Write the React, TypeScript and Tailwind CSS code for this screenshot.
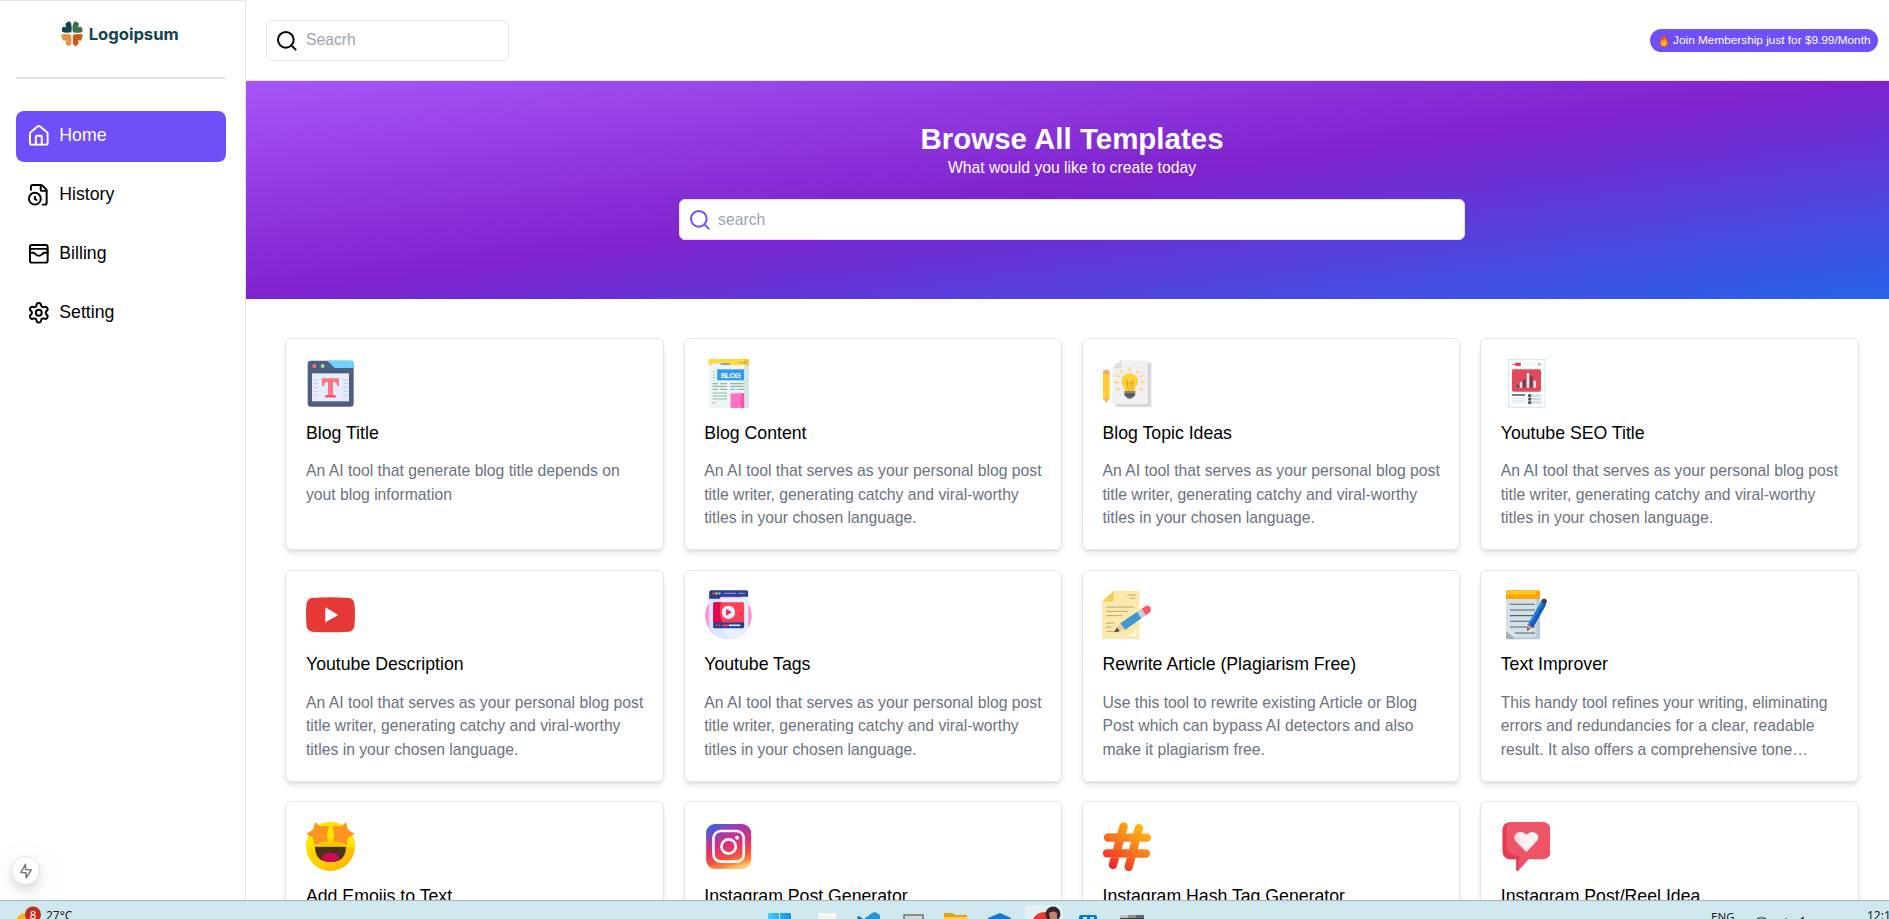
import React from "react";
import { FileClock, House, Search, Settings, WalletCards } from "lucide-react";

type IconProps = { box: string; children: React.ReactNode };

function Art({ box, children }: IconProps) {
  return (
    <svg viewBox={box} className="size-12.5 shrink-0">
      {children}
    </svg>
  );
}

const BlogTitleIcon = () => (
  <Art box="78 87 147.5 147.5">
    <rect x="83" y="92" width="138" height="138" rx="9" fill="#4d5e80" />
    <path d="M142 92h70a9 9 0 0 1 9 9v13h-57z" fill="#6fd1ff" />
    <circle cx="103" cy="108" r="6" fill="#f9737a" />
    <circle cx="128" cy="108" r="6" fill="#a5dc86" />
    <rect x="96" y="130" width="111" height="84" fill="#e6ecfb" />
    <path d="M99 150h13M99 161h13M99 172h13M99 184h13M99 195h13M190 150h14M190 161h14M190 172h14M190 184h14M190 195h14" stroke="#bccbf0" strokeWidth="3" />
    <path d="M126 145h51v23h-6q-1-12-9-12h-3v38q0 3 8 3v5h-31v-5q8 0 8-3v-38h-3q-8 0-9 12h-6z" fill="#f97881" />
    <path d="M136 196h31v6h-31z" fill="#ee4f5f" />
  </Art>
);

const BlogContentIcon = () => (
  <Art box="1271.5 87 147.5 147.5">
    <path d="M1286 95h120v139h-120z" fill="#edf5f3" />
    <path d="M1393 104h13v130h-13z" fill="#cfe6e3" />
    <path d="M1285 87h121v18h-59l-8-5h-36l-10 5h-8z" fill="#ffd83d" />
    <path d="M1393 87h13v18h-13z" fill="#f8bf35" />
    <path d="M1318 100h28l4 5h-25z" fill="#8599a8" />
    <path d="M1377 97h18" stroke="#ae8735" strokeWidth="3" strokeDasharray="4 3" />
    <rect x="1311" y="118" width="81" height="33" fill="#2f9df4" />
    <text x="1351.500" y="143.500" textAnchor="middle" fontFamily="Liberation Sans" fontSize="23" fontWeight="700" fill="#fff" textLength="60">BLOG</text>
    <path d="M1301 123v28" stroke="#7fb0aa" strokeWidth="4" strokeDasharray="4 5" />
    <path d="M1297 161h16m7 0h21M1297 169h44M1297 178h16m7 0h21M1350 161h43M1350 169h43M1350 178h14m7 0h22M1297 189h44M1297 198h44M1297 207h44M1297 218h8" stroke="#91b6b1" strokeWidth="3.500" />
    <path d="M1351 190h41v44h-41z" fill="#ff72c0" />
    <path d="M1383 190h9v44h-9z" fill="#f950ac" />
  </Art>
);

const IdeaIcon = () => (
  <Art box="66 87 147.5 147.5">
    <path d="M107 99h107v132h-107z" fill="#d8d8da" />
    <path d="M125 91h78v131h-106v-106z" fill="#f0f0f2" />
    <path d="M125 90v25h-28z" fill="#dcdcde" />
    <path d="M69 130a10 10 0 0 1 20 0v76h-20z" fill="#ffca37" />
    <path d="M69 133v-4a10 10 0 0 1 20 0v4z" fill="#efae68" />
    <path d="M69 205h20l-10 14z" fill="#efb36e" />
    <path d="M149 112v10M122 121l6 9M176 121l-6 9M109 136l9 5M189 136l-9 5M103 157h13M182 157h13M110 180l9-5M188 180l-9-5" stroke="#ffcc43" strokeWidth="4" />
    <path d="M149 130c-16 0-25 12-24 26 1 11 8 16 10 28h29c1-12 8-17 10-28 1-14-9-26-25-26z" fill="#ffd23a" />
    <path d="M145 182l-5-29 9 10 10-10-5 29" fill="none" stroke="#efa51e" strokeWidth="4" />
    <path d="M133 183h33v12l-7 6-5 6h-10l-5-6-6-6z" fill="#8a8781" />
    <path d="M134 190h31v5l-6 7h-19l-6-7z" fill="#55575a" />
  </Art>
);

const SeoIcon = () => (
  <Art box="1260 87 147.500 147.500">
    <rect x="1282" y="88" width="110" height="145" fill="#fafdfe" stroke="#ccdbe5" strokeWidth="2" />
    <path d="M1293 103h12" stroke="#e36c77" strokeWidth="3" />
    <rect x="1302" y="98" width="18" height="10" rx="4" fill="#df4352" />
    <circle cx="1375" cy="103" r="5" fill="#b3c2cc" />
    <path d="M1326 103h40" stroke="#eaf0f4" strokeWidth="3" />
    <rect x="1293" y="118" width="87" height="67" rx="5" fill="#e04a5b" />
    <path d="M1311 173v-9M1330 173v-25M1351 173v-34" stroke="#45495c" strokeWidth="7" />
    <path d="M1320 173v-17M1341 173v-44M1361 173v-21" stroke="#fff0f1" strokeWidth="7" />
    <path d="M1293 195h39" stroke="#6c8193" strokeWidth="6" />
    <path d="M1341 197h39M1341 207h39M1341 217h39" stroke="#ccd9e2" strokeWidth="7" />
    <path d="M1346 193v29" stroke="#354c63" strokeWidth="8" strokeDasharray="8 2.500" />
    <path d="M1293 205h39M1293 211h39M1293 217h39" stroke="#e4e8ec" strokeWidth="4" />
  </Art>
);

const YoutubeIcon = () => (
  <Art box="78 77 147.500 147.500">
    <path d="M96 101q55-5 111 0 14 2 16 16 4 34 0 69-2 14-16 16-56 4-111 0-14-2-16-16-4-35 0-69 2-14 16-16z" fill="#e63935" />
    <path d="M136 129v45l39-22z" fill="#fff" />
  </Art>
);

const TagsIcon = () => (
  <Art box="1271.500 77 147.500 147.500">
    <circle cx="1345" cy="154" r="70" fill="#ff92d0" />
    <path d="M1287 100h117v90q-20 34-59 34t-58-34z" fill="#d9e6ff" />
    <path d="M1322 100h82v90q-20 34-59 34-25-20-23-60z" fill="#e6effe" />
    <path d="M1287 103v-19a6 6 0 0 1 6-6h105a6 6 0 0 1 6 6v13h-82l-4 6z" fill="#2b3f92" />
    <circle cx="1300" cy="87" r="3.500" fill="#f45" />
    <circle cx="1309" cy="87" r="3.500" fill="#fcd648" />
    <circle cx="1318" cy="87" r="3.500" fill="#7fd3a8" />
    <path d="M1331 87h37m6 0h20" stroke="#7893d6" strokeWidth="4" />
    <path d="M1299 119a5 5 0 0 1 5-5h83a5 5 0 0 1 5 5v56h-93z" fill="#ff4158" />
    <path d="M1299 119a5 5 0 0 1 5-5h18q-6 35 4 61h-27z" fill="#e3064f" />
    <path d="M1299 174h93v13a5 5 0 0 1-5 5h-83a5 5 0 0 1-5-5z" fill="#2b3f92" />
    <circle cx="1345" cy="144" r="20" fill="#eef2ff" />
    <path d="M1338 134v20l17-10z" fill="#ef234f" />
    <path d="M1346 183h34" stroke="#dce6ff" strokeWidth="5" />
    <path d="M1326 183h19M1308 183h4m4 0h4" stroke="#ff4158" strokeWidth="5" />
  </Art>
);

const RewriteIcon = () => (
  <Art box="66 77 150 147.500">
    <path d="M102 78h78v147h-114v-111z" fill="#fbe9ab" />
    <path d="M102 78v33h-36z" fill="#f0cf55" />
    <path d="M144 91h25M152 101h17M79 128h85M79 141h66M79 154h48M79 177h25M79 189h16M79 202h28" stroke="#bba576" strokeWidth="3" />
    <path d="M149 213h19v-15" fill="none" stroke="#fffaf0" strokeWidth="6" />
    <path d="M122 176l14 20-33 9z" fill="#efc9a2" />
    <path d="M112 190l8 12-17 3z" fill="#3d4350" />
    <path d="M122 177l51-35 14 20-50 35z" fill="#3f98d4" />
    <path d="M173 142l14-9 14 20-14 9z" fill="#c8ccd2" />
    <path d="M187 133l12-8q8-5 14 3 5 9-2 17l-11 8z" fill="#fa5565" />
  </Art>
);

const ImproveIcon = () => (
  <Art box="1260 77 147.500 147.500">
    <path d="M1275 99h102v126h-79l-23-27z" fill="#b9cbd4" />
    <path d="M1275 99h91v120h-68l-23-21z" fill="#d4e0e6" />
    <path d="M1275 198l28 27h-24q-4 0-4-4z" fill="#9db1bc" />
    <path d="M1275 192q27 4 29 29l-29-20z" fill="#dae5ea" />
    <path d="M1275 82q0-4 4-4h94q4 0 4 4v22h-102z" fill="#ffa40d" />
    <path d="M1275 82q0-4 4-4h87v14h-91z" fill="#ffc41d" />
    <path d="M1287 120h75M1287 137h75M1287 154h75M1287 171h75M1287 188h75M1302 206h60" stroke="#516571" strokeWidth="3.200" />
    <path d="M1340 179l17 9-18 11z" fill="#f48a6b" />
    <path d="M1339 190l7 5-8 4z" fill="#533a3d" />
    <path d="M1340 181l40-69 15 9-39 69z" fill="#207ce0" />
    <path d="M1347 184l40-67 8 4-39 69z" fill="#155db5" />
    <path d="M1379 113l5-8q5-4 10-1 6 4 3 10l-4 7z" fill="#354553" />
  </Art>
);

const EmojiIcon = () => (
  <Art box="78 81 147.500 147.500">
    <defs>
      <linearGradient id="emojiFace" x1="0" y1="0" x2="1" y2="1">
        <stop offset="0" stopColor="#ffea00" />
        <stop offset="0.500" stopColor="#fed000" />
        <stop offset="1" stopColor="#ffad05" />
      </linearGradient>
    </defs>
    <circle cx="151.500" cy="154.500" r="73.500" fill="url(#emojiFace)" />
    <path d="M80 140a73 73 0 0 1 143 0l2 15h-147z" fill="#ffe500" />
    <path d="M124 141h55l15 12h-85z" fill="#ffc400" />
    <path d="M106 82l15 12h27q-12 25-2 46h-20l-22 12-5-24-20-12 20-12zM198 82l-15 12h-27q12 25 2 46h20l22 12 4-24 20-12-20-12z" fill="#ff9420" />
    <path d="M105 155h93q0 46-46.500 46t-46.500-46z" fill="#49311c" />
    <path d="M123 190q7-17 28.500-17t28.500 17q-10 11-28.500 11t-28.500-11z" fill="#cf0757" />
  </Art>
);

const InstagramIcon = () => (
  <Art box="1271.500 81 147.500 147.500">
    <defs>
      <linearGradient id="igBase" x1="0.300" y1="0" x2="0.600" y2="1">
        <stop offset="0" stopColor="#6655cf" />
        <stop offset="0.220" stopColor="#b136a5" />
        <stop offset="0.500" stopColor="#e22e75" />
        <stop offset="0.750" stopColor="#f4523e" />
        <stop offset="0.900" stopColor="#fb8a3c" />
        <stop offset="1" stopColor="#ffc96f" />
      </linearGradient>
      <radialGradient id="igCorner" cx="0" cy="0" r="0.500">
        <stop offset="0" stopColor="#3a62e0" />
        <stop offset="1" stopColor="#3a62e0" stopOpacity="0" />
      </radialGradient>
    </defs>
    <rect x="1278" y="87" width="135" height="135" rx="27" fill="url(#igBase)" />
    <rect x="1278" y="87" width="135" height="135" rx="27" fill="url(#igCorner)" />
    <rect x="1300" y="108" width="91" height="92" rx="22" fill="none" stroke="#fff" strokeWidth="8" />
    <circle cx="1345.500" cy="154.500" r="21.500" fill="none" stroke="#fff" strokeWidth="8" />
    <circle cx="1371" cy="128" r="6" fill="#fff" />
  </Art>
);

const HashIcon = () => (
  <Art box="66 81 147.500 147.500">
    <defs>
      <linearGradient id="hashFill" gradientUnits="userSpaceOnUse" x1="92" y1="224" x2="188" y2="90">
        <stop offset="0" stopColor="#ef1c28" />
        <stop offset="0.500" stopColor="#f67520" />
        <stop offset="1" stopColor="#fcbf12" />
      </linearGradient>
    </defs>
    <g fill="none" stroke="url(#hashFill)" strokeWidth="25" strokeLinecap="round" strokeLinejoin="round">
      <path d="M131 94L99 210M177 99L146 216M84 127.500L201 128M81 175L198 175.500" />
    </g>
  </Art>
);

const HeartIcon = () => (
  <Art box="1260 81 147.500 147.500">
    <path d="M1288 81h98a23 23 0 0 1 23 23v66a23 23 0 0 1-23 23h-43l-31 34q-6 3-6-3v-31h-18a23 23 0 0 1-23-23v-66a23 23 0 0 1 23-23z" fill="#ee5468" />
    <path d="M1280 83q-3 7-3 20v52q0 25 39 28-5 30-5 44-5 2-5-4v-30h-18a23 23 0 0 1-23-23v-66q0-17 15-21z" fill="#e43b50" />
    <path d="M1336 171l-31-32q-9-12 0-23 16-12 31 3 16-15 31-3 10 11 0 23z" fill="#fdf1f2" />
    <path d="M1336 171l-31-32q-9-12 0-23 5-5 11-5-8 22 20 60z" fill="#f4dde0" />
  </Art>
);

const blogDesc =
  "An AI tool that serves as your personal blog post title writer, generating catchy and viral-worthy titles in your chosen language.";

const templates = [
  { name: "Blog Title", desc: "An AI tool that generate blog title depends on yout blog information", Icon: BlogTitleIcon },
  { name: "Blog Content", desc: blogDesc, Icon: BlogContentIcon },
  { name: "Blog Topic Ideas", desc: blogDesc, Icon: IdeaIcon },
  { name: "Youtube SEO Title", desc: blogDesc, Icon: SeoIcon },
  { name: "Youtube Description", desc: blogDesc, Icon: YoutubeIcon },
  { name: "Youtube Tags", desc: blogDesc, Icon: TagsIcon },
  {
    name: "Rewrite Article (Plagiarism Free)",
    desc: "Use this tool to rewrite existing Article or Blog Post which can bypass AI detectors and also make it plagiarism free.",
    Icon: RewriteIcon,
  },
  {
    name: "Text Improver",
    desc: "This handy tool refines your writing, eliminating errors and redundancies for a clear, readable result. It also offers a comprehensive tone analysis and suggests better word choices.",
    Icon: ImproveIcon,
  },
  { name: "Add Emojis to Text", desc: "", Icon: EmojiIcon },
  { name: "Instagram Post Generator", desc: "", Icon: InstagramIcon },
  { name: "Instagram Hash Tag Generator", desc: "", Icon: HashIcon },
  { name: "Instagram Post/Reel Idea", desc: "", Icon: HeartIcon },
];

const menu = [
  { name: "Home", Icon: House },
  { name: "History", Icon: FileClock },
  { name: "Billing", Icon: WalletCards },
  { name: "Setting", Icon: Settings },
];

function Logo() {
  return (
    <svg viewBox="186 62 354 78" className="h-[26px] w-[118px]">
      <path d="M217 96q-17 3-28-2 1-5-1-9 5-4 5-6l9 2q-4-8-2-12 6-4 12-6l4 6q4 13 1 27z" fill="#124350" />
      <path d="M222 96q-4-16 1-27l4-6q7 1 12 6 2 4-2 12l9-2q0 2 5 6-2 4 0 9-12 6-29 2z" fill="#3c7048" />
      <path d="M216 103q3 14 0 29l-5 6q-6-2-11-7-2-4 2-11l-9 1q-5-7-7-18 14-4 30 0z" fill="#e09445" />
      <path d="M222 103q16-4 30 0-2 11-6 18l-9-1q4 7 1 11-4 5-11 7l-4-7q-3-13-1-28z" fill="#ca5b1c" />
      <text x="269" y="119" fontFamily="Inter, sans-serif" fontSize="49" fontWeight="700" fill="#124350" textLength="270" lengthAdjust="spacingAndGlyphs">
        Logoipsum
      </text>
    </svg>
  );
}

function Sidebar() {
  return (
    <aside className="relative w-[246px] shrink-0 border-t border-r border-[#e5e5e5] pl-4 pr-[19px]">
      <div className="flex h-[76px] justify-center pt-[20px] pr-px">
        <Logo />
      </div>
      <div className="h-[2px] bg-[#e5e5e5]" />
      <nav className="mt-[32px] flex flex-col gap-2">
        {menu.map(({ name, Icon }, i) => (
          <div
            key={name}
            className={
              i === 0
                ? "flex gap-[9px] rounded-lg bg-[#704ef8] py-3 pr-3 pl-[11px] text-lg text-white"
                : "flex gap-[9px] rounded-lg py-3 pr-3 pl-[11px] text-lg text-black"
            }
          >
            <Icon className="mt-px size-6" />
            <span className="-mt-px mb-px">{name}</span>
          </div>
        ))}
      </nav>
      <div className="absolute bottom-[15px] left-[11px] flex size-[29px] items-center justify-center rounded-full border border-[#e2e2e2] bg-white shadow-[0_5px_10px_rgba(0,0,0,0.12),0_10px_40px_rgba(0,0,0,0.08)]">
        <svg viewBox="59 97 37 49" className="h-[16px] w-[12px]">
          <path d="M76 101v16l18 1-16 25v-16l-16-1z" fill="none" stroke="#777" strokeWidth="4.500" strokeLinejoin="round" />
        </svg>
      </div>
    </aside>
  );
}

function Header() {
  return (
    <header className="flex items-center justify-between border-b border-[#e5e5e5] bg-white px-5 pt-[20px] pb-[19px]">
      <div className="flex h-[41px] w-[243px] gap-2 rounded-md border border-[#e5e5e5] p-2">
        <Search className="size-6 text-black" />
        <span className="-mt-px text-[#9ca3af]">Seacrh</span>
      </div>
      <div className="flex items-center rounded-full bg-[#704ef8] py-1 pr-2 pl-[9px] text-xs text-white">
        <svg viewBox="122 100 28 38" className="mr-[4px] h-[13px] w-[10px]">
          <path d="M138 101q0 7 5 12 7 8 6 14-2 11-13 11-12-1-13-12 0-8 5-15l2 5q2-9 8-15z" fill="#f4511e" />
          <path d="M138 113q1 4 5 8 4 12-7 15-11-2-9-12l4-6 2 3z" fill="#ffb62e" />
        </svg>
        Join Membership just for $9.99/Month
      </div>
    </header>
  );
}

function Hero() {
  return (
    <section className="flex h-[218px] flex-col items-center bg-linear-to-br/srgb from-[#a855f7] via-[#7e22ce] to-[#2563eb] p-10 text-white">
      <h2 className="-mb-px pt-px text-3xl font-bold">Browse All Templates</h2>
      <p>What would you like to create today</p>
      <div className="my-5 flex h-[41px] w-1/2 gap-[7px] rounded-md border border-[#e5e5e5] bg-white p-2">
        <Search className="size-6 text-[#704ef8]" />
        <span className="text-[#9ca3af]">search</span>
      </div>
    </section>
  );
}

function Taskbar() {
  return (
    <footer className="flex h-[19px] justify-between overflow-hidden border-t border-[#a5b4ba] bg-[#cfe8ee] font-['Noto_Sans',sans-serif] text-[12px] leading-[16px] text-[#1b1b1b]">
      <div className="flex w-[280px]">
        <svg viewBox="0 0 46 18" className="h-[18px] w-[46px]">
          <circle cx="25" cy="21" r="9" fill="#f0b429" />
          <circle cx="33" cy="13.500" r="8" fill="#c42b1c" />
          <text x="33" y="18" textAnchor="middle" fontFamily="Noto Sans" fontSize="11.500" fill="#fff">8</text>
        </svg>
        <span className="pt-[7px]">27°C</span>
      </div>
      <svg viewBox="740 901 430 18" className="mr-[13px] ml-auto h-[18px] w-[430px] shrink-0">
        <defs>
          <linearGradient id="winTile" x1="0" x2="1">
            <stop offset="0" stopColor="#4cc9fb" />
            <stop offset="1" stopColor="#1590e0" />
          </linearGradient>
        </defs>
        <path d="M769 913h10v6h-11v-5zM780 913h10l1 1v5h-11z" fill="url(#winTile)" />
        <rect x="818" y="913" width="18" height="8" rx="1" fill="#f6f6f6" />
        <path d="M872 913l3-1 5 3v4h-16z" fill="#2196d3" />
        <path d="M857 917l2-1 4 3h-5z" fill="#1272b0" />
        <path d="M904 919v-4h19v4" fill="#d7dadb" stroke="#6f7375" strokeWidth="1.500" />
        <path d="M944 914q0-1 1-1h7l3 2h12v4h-23z" fill="#e3a212" />
        <path d="M944 917h24v2h-24z" fill="#fdd25c" />
        <path d="M988 918l12-5 11 5v1h-23z" fill="#1478cf" />
        <rect x="1025" y="905" width="37.500" height="20" rx="3" fill="#e4f1f4" />
        <path d="M1033 919q4-7 12-7t12 7z" fill="#e33b2e" />
        <circle cx="1053" cy="914" r="7.500" fill="#35252f" />
        <path d="M1049 913q4-3 8 0v6h-7z" fill="#c28472" />
        <path d="M1079 917q0-2 2-2h14q2 0 2 2v2h-18z" fill="#0b78c6" />
        <path d="M1083 918h4m3 0h4" stroke="#fff" strokeWidth="1.500" />
        <path d="M1120 915h24v4h-24z" fill="#3c3c3c" />
        <path d="M1120 915h8v3h-8z" fill="#bfc0c0" />
        <path d="M1128 915h8v3h-8z" fill="#8f9191" />
        <path d="M1136 915h8v3h-8z" fill="#666" />
      </svg>
      <div className="flex w-[706px] shrink-0 justify-end whitespace-nowrap">
        <span className="w-[44px] pt-[8px] text-[11.5px]">ENG</span>
        <svg viewBox="1755 901 112 18" className="h-[18px] w-[112px]">
          <path d="M1757 918.500q5-1.500 9 0M1786 919v-1M1801 919l2-1.500v1.500" stroke="#333" strokeWidth="1.200" fill="none" />
        </svg>
        <span className="w-[22px] overflow-hidden pt-[7px]">12:1</span>
      </div>
    </footer>
  );
}

export default function App() {
  return (
    <div className="h-[919px] w-full overflow-hidden bg-white font-['Liberation_Sans',Arial,sans-serif] [--spacing:3.932px] [--text-3xl:29.49px] [--text-base:15.73px] [--text-lg:17.69px] [--text-xs:11.8px]">
      <div className="flex h-[900px] w-[1898px] overflow-hidden text-base">
        <Sidebar />
        <main className="min-w-0 flex-1">
          <Header />
          <Hero />
          <div className="grid grid-cols-4 gap-5 p-10">
            {templates.map(({ name, desc, Icon }) => (
              <article
                key={name}
                className="flex h-[211.8px] flex-col gap-3 rounded-md border border-[#e5e5e5] bg-white p-5 shadow-[0_4px_6px_-1px_rgba(0,0,0,0.1),0_2px_4px_-2px_rgba(0,0,0,0.1)]"
              >
                <Icon />
                <h3 className="text-lg text-black">{name}</h3>
                <p className="-mr-1.5 line-clamp-3 text-[#6b7280]">{desc}</p>
              </article>
            ))}
          </div>
        </main>
      </div>
      <Taskbar />
    </div>
  );
}
